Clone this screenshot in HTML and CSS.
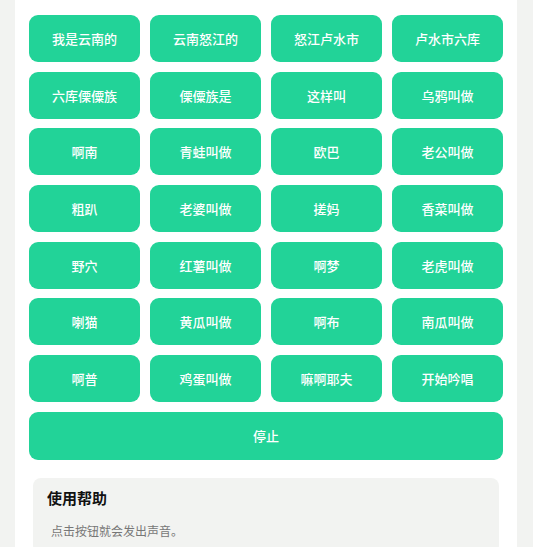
FILE: index.html
```html
<!DOCTYPE html>
<html lang="zh">
<head>
<meta charset="utf-8">
<link rel="stylesheet" href="styles.css">
</head>
<body>
<div class="card">
  <div class="grid">
    <button class="btn">我是云南的</button>
    <button class="btn">云南怒江的</button>
    <button class="btn">怒江卢水市</button>
    <button class="btn">卢水市六库</button>
    <button class="btn">六库傈僳族</button>
    <button class="btn">傈僳族是</button>
    <button class="btn">这样叫</button>
    <button class="btn">乌鸦叫做</button>
    <button class="btn">啊南</button>
    <button class="btn">青蛙叫做</button>
    <button class="btn">欧巴</button>
    <button class="btn">老公叫做</button>
    <button class="btn">粗趴</button>
    <button class="btn">老婆叫做</button>
    <button class="btn">搓妈</button>
    <button class="btn">香菜叫做</button>
    <button class="btn">野穴</button>
    <button class="btn">红薯叫做</button>
    <button class="btn">啊梦</button>
    <button class="btn">老虎叫做</button>
    <button class="btn">喇猫</button>
    <button class="btn">黄瓜叫做</button>
    <button class="btn">啊布</button>
    <button class="btn">南瓜叫做</button>
    <button class="btn">啊普</button>
    <button class="btn">鸡蛋叫做</button>
    <button class="btn">嘛啊耶夫</button>
    <button class="btn">开始吟唱</button>
  </div>
  <button class="btn stop">停止</button>
  <div class="help">
    <h3 class="help-title">使用帮助</h3>
    <p class="help-text">点击按钮就会发出声音。</p>
  </div>
</div>
</body>
</html>
```
FILE: styles.css
```css
html, body {
  margin: 0;
  padding: 0;
}
body {
  background: #f2f3f1;
  font-family: "Noto Sans CJK SC", "Noto Sans", sans-serif;
}
.card {
  width: 502px;
  margin-left: 15px;
  background: #ffffff;
  box-sizing: border-box;
  padding: 15px 14px 20px;
  min-height: 547px;
}
.grid {
  display: grid;
  grid-template-columns: repeat(4, 111px);
  grid-auto-rows: 47px;
  column-gap: 10px;
  row-gap: 9.7px;
}
.btn {
  border: none;
  background: #22d398;
  color: #ffffff;
  font-family: inherit;
  font-size: 13px;
  font-weight: 500;
  border-radius: 9px;
  padding: 0;
  height: 47px;
  cursor: pointer;
}
.stop {
  display: block;
  width: 100%;
  height: 48px;
  margin-top: 9.5px;
}
.help {
  margin: 18px 4px 0;
  background: #f2f3f1;
  border-radius: 8px;
  padding: 9px 14px 14px;
}
.help-title {
  margin: 0;
  font-size: 15px;
  font-weight: 700;
  color: #111111;
  line-height: 22px;
}
.help-text {
  margin: 13px 0 0 4px;
  font-size: 12px;
  color: #777777;
  line-height: 18px;
}
```
